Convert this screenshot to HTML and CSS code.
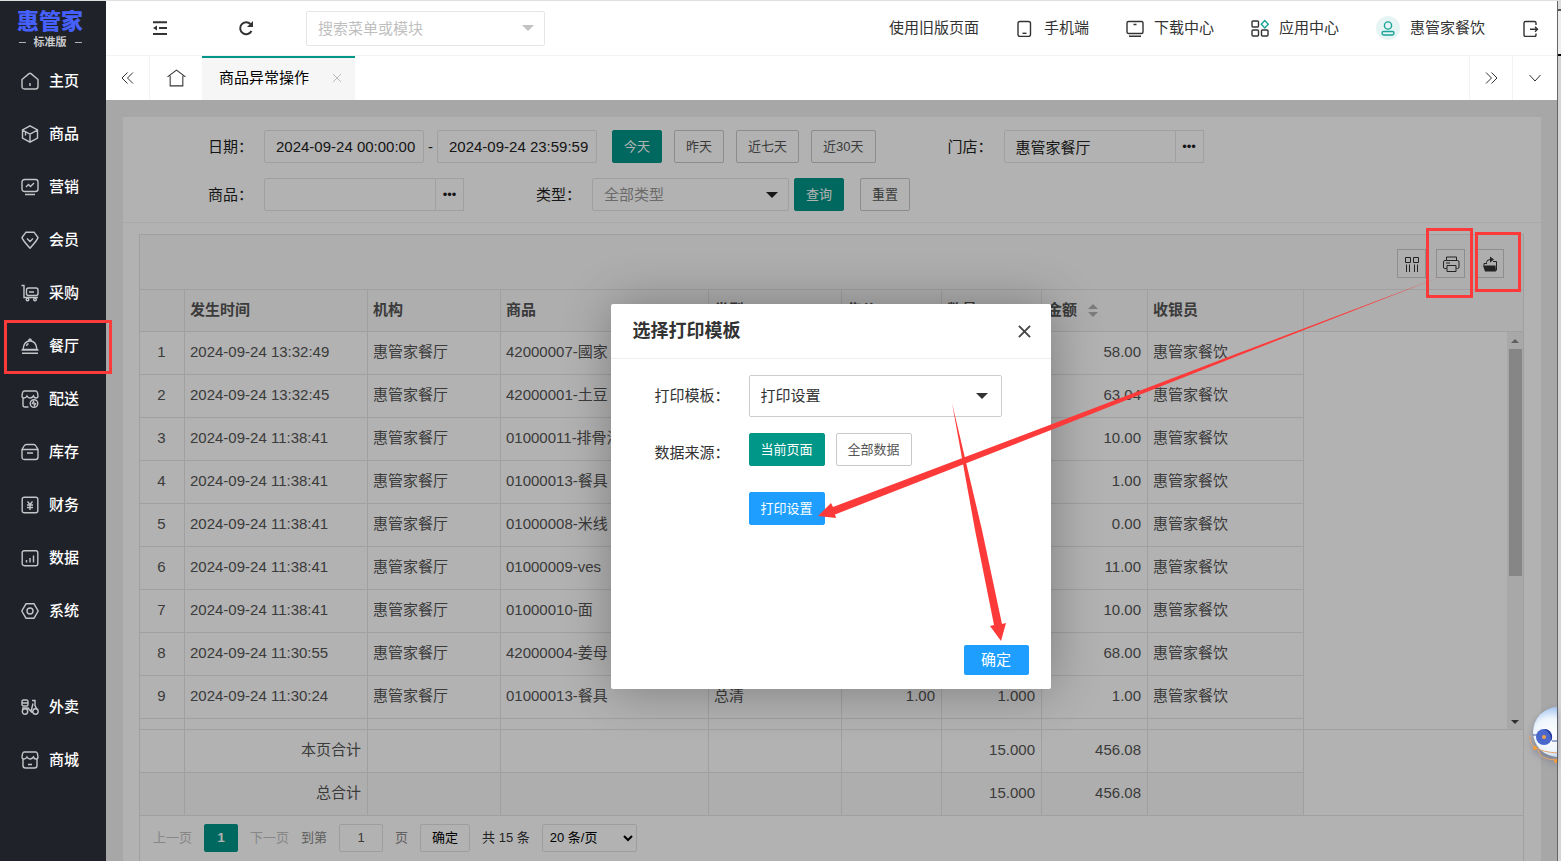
FILE: index.html
```html
<!DOCTYPE html>
<html lang="zh-CN">
<head>
<meta charset="utf-8">
<title>商品异常操作</title>
<link rel="stylesheet" href="styles.css">
</head>
<body>
<div class="app">
  <aside class="sidebar">
    <div class="logo"><strong class="logo-name">惠管家</strong><span class="logo-edition">标准版</span></div>
    <nav class="menu">
      <a class="menu-item" href="#"><svg class="icon" viewBox="0 0 18 18"><path d="M1 7.5 8 1.6q1-.8 2 0L17 7.500V14.500Q17 17 14.500 17H3.500Q1 17 1 14.500ZM9 11v3"/></svg>主页</a>
      <a class="menu-item" href="#"><svg class="icon" viewBox="0 0 18 18"><path d="M9 .8 16.500 5v8L9 17.200 1.500 13V5ZM1.500 5 9 9.200 16.500 5M9 9.200v8M4.500 7v3.500"/></svg>商品</a>
      <a class="menu-item" href="#"><svg class="icon" viewBox="0 0 18 18"><rect x="1" y="1.500" width="16" height="12" rx="2.500"/><path d="m5 9 2.500-2.500 2 2L13 5M4 16.500h10"/></svg>营销</a>
      <a class="menu-item" href="#"><svg class="icon" viewBox="0 0 18 18"><path d="M5 1.200h8L17 6.500Q16.500 9 9 17.200 1.500 9 1 6.500ZM6 7.500l3 3 3-3"/></svg>会员</a>
      <a class="menu-item" href="#"><svg class="icon" viewBox="0 0 18 18"><path d="M.5 1.500h2.500V13.500h14M8 8h5"/><rect x="5.500" y="4" width="11.500" height="7.500" rx="2"/><circle cx="6.500" cy="15.500" r="1.300"/><circle cx="14" cy="15.500" r="1.300"/></svg>采购</a>
      <a class="menu-item" href="#"><svg class="icon" viewBox="0 0 18 18"><path d="M2 12.500C2.500 7.500 5 4 9 4s6.500 3.500 7 8.500ZM.5 13h17M1 16.200h16M7.500 3.500q1.500-3 3 0M5.500 9q.5-2 2-2.500"/></svg>餐厅</a>
      <a class="menu-item" href="#"><svg class="icon" viewBox="0 0 18 18"><path d="M7.500 17H4Q2 17 2 15V8M3 1h12q1 0 1.500 2L17 6q0 2-2 2t-2.500-2Q11 8 9 8T6 6Q5 8 3 8T1 6l.5-3Q2 1 3 1"/><circle cx="13" cy="13.500" r="3.800"/><path d="m11 14 1.500-2.500 1 4L15 13"/></svg>配送</a>
      <a class="menu-item" href="#"><svg class="icon" viewBox="0 0 18 18"><path d="M1 6.500 3 3q.8-1.500 2.500-1.500h7Q14.200 1.500 15 3l2 3.500v7.500q0 2.500-2.500 2.500h-11Q1 16.500 1 14ZM1 6.500h16M6 10h6"/></svg>库存</a>
      <a class="menu-item" href="#"><svg class="icon" viewBox="0 0 18 18"><rect x="1.200" y="1.200" width="15.600" height="15.600" rx="2"/><path d="m6.500 5.500 2.500 3 2.500-3M6 9h6M6 11.500h6M9 8.500V14"/></svg>财务</a>
      <a class="menu-item" href="#"><svg class="icon" viewBox="0 0 18 18"><rect x="1.200" y="1.700" width="15.600" height="15" rx="2"/><path d="M5.500 11v2.500M9 9v4.500M12.500 6.500v7"/></svg>数据</a>
      <a class="menu-item" href="#"><svg class="icon" viewBox="0 0 18 18"><path d="M5 1.800h8L17.200 9 13 16.200H5L.8 9Z"/><circle cx="9" cy="9" r="3"/></svg>系统</a>
      <a class="menu-item menu-group" href="#"><svg class="icon" viewBox="0 0 18 18"><rect x="1" y="2" width="6" height="6" rx="1.500"/><path d="M1 5h6M1 10h6l3 3.500 2-8M11 2.500h3v5l2 4M10 14h2"/><circle cx="4" cy="13.500" r="2.700"/><circle cx="14.500" cy="13.500" r="2.700"/></svg>外卖</a>
      <a class="menu-item" href="#"><svg class="icon" viewBox="0 0 18 18"><path d="M2 8v6.500Q2 17 4.500 17h9q2.500 0 2.500-2.500V8M7 13.500h4M3 1h12q1 0 1.500 2L17 6q0 2-2 2t-2.500-2Q11 8 9 8T6 6Q5 8 3 8T1 6l.5-3Q2 1 3 1"/></svg>商城</a>
    </nav>
  </aside>

  <div class="main">
    <header class="topbar">
      <button class="icon-button" aria-label="收起菜单"><svg class="icon" viewBox="0 0 18 18"><path class="thick" d="M2 3.200h14M8 9h8M2 15h14"/><path class="solid" d="M2 9l4-2.500v5z"/></svg></button>
      <button class="icon-button refresh" aria-label="刷新"><svg class="icon" viewBox="0 0 18 18"><path class="thick" d="M14.500 12A6 6 0 1 1 13.500 5"/><path class="solid" d="M16 2v6h-6z"/></svg></button>
      <div class="select-box search"><input class="field" type="text" aria-label="搜索菜单或模块" placeholder="搜索菜单或模块"><svg class="caret" viewBox="0 0 12 6"><path d="M0 0h12L6 6z"/></svg></div>
      <nav class="links">
        <a class="link" href="#">使用旧版页面</a>
        <a class="link" href="#"><svg class="icon" viewBox="0 0 18 18"><rect x="2" y="2.500" width="12.500" height="15" rx="2"/><path d="M6.500 14.300h4"/></svg>手机端</a>
        <a class="link" href="#"><svg class="icon" viewBox="0 0 18 18"><rect x="1" y="2.500" width="16" height="12" rx="1.500"/><path d="M7.500 5.500h3M3 17.200h12"/></svg>下载中心</a>
        <a class="link" href="#"><svg class="icon" viewBox="0 0 18 18"><rect x="1" y="2" width="6.500" height="6" rx="1"/><rect x="1" y="11" width="6.500" height="6" rx="1"/><rect x="10.500" y="11" width="6.500" height="6" rx="1"/><path class="green" d="M13.800 1.500 17.300 5.200 13.800 9 10.300 5.200Z"/></svg>应用中心</a>
        <a class="link" href="#"><span class="avatar"><svg class="icon" viewBox="0 0 18 18"><circle class="green" cx="9" cy="6.500" r="3.600"/><rect class="green" x="3" y="12.500" width="12" height="3.500" rx="1.700"/></svg></span>惠管家餐饮</a>
        <a class="link" href="#" aria-label="退出"><svg class="icon" viewBox="0 0 18 18"><path d="M14 6V4q0-1.500-1.500-1.500h-9Q2 2.500 2 4v12q0 1.500 1.500 1.500h9q1.500 0 1.500-1.500V14.500M8 10.300h7.500M13 7.800l2.500 2.500-2.500 2.500"/></svg></a>
      </nav>
    </header>

    <div class="tabs">
      <button class="tab-control" aria-label="向左"><svg class="icon thin" viewBox="0 0 18 18"><path d="M8.500 3.500 3 9l5.500 5.500M14 3.500 8.500 9l5.500 5.500"/></svg></button>
      <a class="tab-home" href="#" aria-label="主页"><svg class="icon thin home" viewBox="0 0 18 18"><path d="M.5 7.500 9 1l8.500 6.500M3 6.500V16h12V6.500"/></svg></a>
      <div class="tab"><span>商品异常操作</span><button class="tab-close" aria-label="关闭标签"><svg viewBox="0 0 10 10"><path d="m1 1 8 8M9 1 1 9"/></svg></button></div>
      <button class="tab-control tab-right" aria-label="向右"><svg class="icon thin" viewBox="0 0 18 18"><path d="M4 3.500 9.500 9 4 14.500M9.500 3.500 15 9l-5.500 5.500"/></svg></button>
      <button class="tab-control tab-more" aria-label="更多"><svg class="icon thin" viewBox="0 0 18 18"><path d="m3.500 6 5.500 6 5.500-6"/></svg></button>
    </div>

    <main class="content">
      <section class="panel">
        <form class="filters">
          <div class="filter-row">
            <label class="filter-label first" for="from">日期：</label>
            <input class="field date" id="from" type="text" value="2024-09-24 00:00:00">
            <span class="dash">-</span>
            <input class="field date" type="text" aria-label="结束日期" value="2024-09-24 23:59:59">
            <div class="buttons">
              <button class="btn primary" type="button">今天</button>
              <button class="btn" type="button">昨天</button>
              <button class="btn" type="button">近七天</button>
              <button class="btn" type="button">近30天</button>
            </div>
            <label class="filter-label" for="store">门店：</label>
            <div class="picker"><input class="field" id="store" type="text" value="惠管家餐厅"><button type="button" class="dots" aria-label="选择门店">•••</button></div>
          </div>
          <div class="filter-row">
            <label class="filter-label first" for="goods">商品：</label>
            <div class="picker"><input class="field" id="goods" type="text"><button type="button" class="dots" aria-label="选择商品">•••</button></div>
            <label class="filter-label" for="kind">类型：</label>
            <div class="select-box kind"><select class="field muted" id="kind"><option>全部类型</option></select><svg class="caret" viewBox="0 0 12 6"><path d="M0 0h12L6 6z"/></svg></div>
            <button class="btn primary query" type="button">查询</button>
            <button class="btn reset" type="button">重置</button>
          </div>
        </form>

        <div class="grid">
          <div class="grid-tools">
            <button class="tool" aria-label="筛选列"><svg class="icon thin" viewBox="0 0 18 18"><path d="M2.500 2.500h5v5h-5zM10.500 2.500h5v5h-5zM3.500 9.500V17M6.500 9.500V17M11.500 9.500V17M14.500 9.500V17"/></svg></button>
            <button class="tool" aria-label="打印"><svg class="icon thin" viewBox="0 0 18 18"><path d="M4.500 5V2h10v3M4.500 13.500H2.500Q1.500 13.500 1.500 12V7Q1.500 5.500 3 5.500h12.500q1.500 0 1.500 1.500v5q0 1.500-1.500 1.500h-1M5 10.500h9v6H5zM4 8h4"/></svg></button>
            <button class="tool" aria-label="导出"><svg class="icon thin" viewBox="0 0 18 18"><path class="solid" d="M2 10.500h12.500L15 16.500H4zM9 1.500l4 3-4 3z"/><path d="M5.500 9V7.500q0-3 4-3M12 6.500h3.500v9M3 10.500v-2h3"/></svg></button>
          </div>
          <div class="grid-head">
            <table class="table">
              <colgroup><col class="c-no"><col class="c-time"><col class="c-org"><col class="c-goods"><col class="c-kind"><col class="c-num"><col class="c-num"><col class="c-sum"><col class="c-user"></colgroup>
              <thead><tr><th></th><th>发生时间</th><th>机构</th><th>商品</th><th>类型</th><th>售价<i class="sort"></i></th><th>数量<i class="sort"></i></th><th>金额<i class="sort"></i></th><th>收银员</th></tr></thead>
            </table>
          </div>
          <div class="grid-body">
            <div class="grid-scroll">
              <table class="table">
                <colgroup><col class="c-no"><col class="c-time"><col class="c-org"><col class="c-goods"><col class="c-kind"><col class="c-num"><col class="c-num"><col class="c-sum"><col class="c-user"></colgroup>
                <tbody>
                  <tr><td>1</td><td>2024-09-24 13:32:49</td><td>惠管家餐厅</td><td>42000007-國家</td><td></td><td></td><td></td><td>58.00</td><td>惠管家餐饮</td></tr>
                  <tr><td>2</td><td>2024-09-24 13:32:45</td><td>惠管家餐厅</td><td>42000001-土豆</td><td></td><td></td><td></td><td>63.04</td><td>惠管家餐饮</td></tr>
                  <tr><td>3</td><td>2024-09-24 11:38:41</td><td>惠管家餐厅</td><td>01000011-排骨汤</td><td></td><td></td><td></td><td>10.00</td><td>惠管家餐饮</td></tr>
                  <tr><td>4</td><td>2024-09-24 11:38:41</td><td>惠管家餐厅</td><td>01000013-餐具</td><td></td><td></td><td></td><td>1.00</td><td>惠管家餐饮</td></tr>
                  <tr><td>5</td><td>2024-09-24 11:38:41</td><td>惠管家餐厅</td><td>01000008-米线</td><td></td><td></td><td></td><td>0.00</td><td>惠管家餐饮</td></tr>
                  <tr><td>6</td><td>2024-09-24 11:38:41</td><td>惠管家餐厅</td><td>01000009-ves</td><td></td><td></td><td></td><td>11.00</td><td>惠管家餐饮</td></tr>
                  <tr><td>7</td><td>2024-09-24 11:38:41</td><td>惠管家餐厅</td><td>01000010-面</td><td></td><td></td><td></td><td>10.00</td><td>惠管家餐饮</td></tr>
                  <tr><td>8</td><td>2024-09-24 11:30:55</td><td>惠管家餐厅</td><td>42000004-姜母</td><td></td><td></td><td></td><td>68.00</td><td>惠管家餐饮</td></tr>
                  <tr><td>9</td><td>2024-09-24 11:30:24</td><td>惠管家餐厅</td><td>01000013-餐具</td><td>总清</td><td>1.00</td><td>1.000</td><td>1.00</td><td>惠管家餐饮</td></tr>
                  <tr><td></td><td></td><td></td><td></td><td></td><td></td><td></td><td></td><td></td></tr>
                </tbody>
              </table>
            </div>
            <div class="scrollbar" aria-hidden="true"><svg viewBox="0 0 8 4"><path class="up" d="M0 4h8L4 0z"/></svg><div class="thumb"></div><svg class="end" viewBox="0 0 8 4"><path class="down" d="M0 0h8L4 4z"/></svg></div>
          </div>
          <table class="table totals">
            <colgroup><col class="c-no"><col class="c-time"><col class="c-org"><col class="c-goods"><col class="c-kind"><col class="c-num"><col class="c-num"><col class="c-sum"><col class="c-user"></colgroup>
            <tbody>
              <tr><td></td><td>本页合计</td><td></td><td></td><td></td><td></td><td>15.000</td><td>456.08</td><td></td></tr>
              <tr class="alt"><td></td><td>总合计</td><td></td><td></td><td></td><td></td><td>15.000</td><td>456.08</td><td></td></tr>
            </tbody>
          </table>
          <div class="pager">
            <button class="pager-link" disabled>上一页</button>
            <button class="page-current">1</button>
            <button class="pager-link" disabled>下一页</button>
            <label class="pager-text" for="page">到第</label>
            <input class="pager-box page-input" id="page" type="text" value="1">
            <span class="pager-text">页</span>
            <button class="pager-box page-go">确定</button>
            <span class="pager-count">共 15 条</span>
            <select class="pager-box page-size" aria-label="每页条数"><option>20 条/页</option></select>
          </div>
        </div>
      </section>

      <div class="shade">
        <div class="dialog" role="dialog" aria-labelledby="dialog-title">
          <div class="dialog-head"><h2 class="dialog-title" id="dialog-title">选择打印模板</h2><button class="dialog-close" aria-label="关闭"><svg viewBox="0 0 14 14"><path d="m1 1 12 12M13 1 1 13"/></svg></button></div>
          <div class="dialog-body">
            <label class="dialog-label" for="template">打印模板：</label>
            <div class="select-box template"><select class="field" id="template"><option>打印设置</option></select><svg class="caret" viewBox="0 0 12 6"><path d="M0 0h12L6 6z"/></svg></div>
            <span class="dialog-label source">数据来源：</span>
            <div class="dialog-buttons"><button class="btn primary">当前页面</button><button class="btn">全部数据</button></div>
            <div class="dialog-setting"><button class="btn blue">打印设置</button></div>
          </div>
          <div class="dialog-foot"><button class="confirm">确定</button></div>
        </div>
      </div>
    </main>
  </div>
  <div class="window-edge"></div>
</div>

<svg class="assistant" viewBox="0 0 28 60">
  <defs><radialGradient id="ball" cx=".35" cy=".55" r=".65"><stop offset="0" stop-color="#fff"/><stop offset=".5" stop-color="#eef5fd"/><stop offset="1" stop-color="#86b0ea"/></radialGradient></defs>
  <circle cx="29" cy="29" r="25" fill="url(#ball)"/>
  <path d="M4 32h5M23 38h5" stroke="#3b55a5" stroke-width="1"/>
  <circle cx="15" cy="34" r="8" fill="#4a67cc"/><path d="M15 26a8 8 0 0 1 7 12q1-8-7-12" fill="#26399a"/>
  <circle cx="15" cy="34" r="2" fill="#f5a04a"/>
  <path d="M1 33Q-1 48 28 50M9 47q2 10 19 10" fill="none" stroke="#e7a468" stroke-width="1"/>
  <circle cx="6" cy="45" r="2" fill="#f79b35"/><circle cx="27" cy="58" r="2" fill="#f79b35"/>
</svg>

<svg class="marks" aria-hidden="true">
  <g fill="none" stroke="#fd3a3a" stroke-width="3"><rect x="5.500" y="321.500" width="105" height="51"/><rect x="1427.500" y="229.500" width="44" height="67"/><rect x="1476.500" y="233.500" width="43" height="57"/></g>
  <g fill="#fd3a3a"><path d="M1440 277 1240 355 1051 430 835 514.500 836 518 818 516 831 503 833 507 1051 424.500 1240 352.500Z"/><path d="M952 403 982 530 1002 624 1006 623 1001 641 990 626 994 625 975 530Z"/></g>
</svg>
</body>
</html>
```

FILE: styles.css
```css
* { box-sizing: border-box; }
body { margin: 0; overflow: hidden; color: #333; font: 15px/20px "Liberation Sans", "Noto Sans CJK SC", sans-serif; }
button, input, select { margin: 0; font: inherit; color: inherit; }
button { padding: 0; border: 0; background: none; }
a { color: inherit; text-decoration: none; }
svg { display: block; fill: none; stroke: currentColor; }

.app { display: flex; height: 100vh; border-top: 1px solid #e0e0e0; }
.icon { width: 18px; height: 18px; flex: none; stroke-width: 1.4; }
.icon.thin { stroke-width: 1; }
.thick { stroke-width: 2; }
.solid { fill: currentColor; stroke: none; }
.green { stroke: #19a497; }

/* Sidebar */
.sidebar { width: 106px; flex: none; background: #20222a; color: #fff; }
.logo { display: flex; flex-direction: column; align-items: center; height: 54px; padding: 9px 6px 0 0; }
.logo-name { color: #4560fb; font-size: 22px; line-height: 24px; font-weight: 900; }
.logo-edition { display: flex; align-items: center; gap: 8px; color: #c9cacc; font-size: 11px; line-height: 16px; font-weight: 700; }
.logo-edition::before, .logo-edition::after { content: ""; width: 7px; height: 1px; background: #b0b1b4; }
.menu-item { display: flex; align-items: center; gap: 10px; height: 53px; padding: 0 0 2px 21px; font-weight: 500; }
.menu-item .icon { color: #c4c5c8; }
.menu-group { margin-top: 43px; }

/* Top bar and tabs */
.main { display: flex; flex: 1; flex-direction: column; min-width: 0; }
.topbar { display: flex; align-items: center; height: 55px; flex: none; padding: 0 17px 0 45px; border-bottom: 1px solid #f3f3f3; background: #fff; }
.refresh { margin-left: 68px; }
.search { width: 239px; margin-left: 51px; }
.links { display: flex; align-items: center; gap: 37px; margin-left: auto; }
.link { display: flex; align-items: center; gap: 10px; white-space: nowrap; }
.avatar { display: grid; place-items: center; width: 24px; height: 24px; border-radius: 50%; background: #e6f5f3; }
.tabs { display: flex; height: 44px; flex: none; background: #fff; color: #333; }
.tab-control { display: grid; place-items: center; width: 44px; border-right: 1px solid #f3f3f3; }
.tab-home { display: grid; place-items: center; width: 52px; }
.home { width: 19px; height: 19px; }
.tab { display: flex; align-items: center; gap: 23px; padding: 0 13px 2px 17px; border-top: 2px solid #009688; background: #f6f6f6; color: #000; }
.tab-close { width: 10px; color: #bbb; }
.tab-right { margin-left: auto; border-left: 1px solid #f3f3f3; }
.tab-more { border-right: 0; }

/* Shared controls */
.field { width: 100%; height: 33px; padding: 0 11px; border: 1px solid #e6e6e6; border-radius: 2px; outline: 0; background: #fff; appearance: none; }
.field::placeholder { color: #bfbfbf; }
.select-box { position: relative; }
.caret { position: absolute; right: 11px; top: 50%; width: 12px; height: 6px; margin-top: -3px; fill: currentColor; stroke: none; pointer-events: none; }
.search .field { height: 35px; }
.search .caret { color: #c2c2c2; }
.btn { height: 33px; padding: 0 11px; border: 1px solid #c9c9c9; border-radius: 2px; background: #fff; color: #555; font-size: 13px; white-space: nowrap; }
.btn.primary { border-color: #009688; background: #009688; color: #fff; }
.btn.blue { border-color: #1e9fff; background: #1e9fff; color: #fff; }

/* Content */
.content { position: relative; display: flex; flex: 1; min-height: 0; padding: 17px 16px 0 17px; background: #f0f0f0; }
.panel { display: flex; flex: 1; flex-direction: column; min-width: 0; background: #fff; }
.filters { display: flex; flex-direction: column; gap: 15px; padding: 13px 0 11px; border-bottom: 1px solid #f3f3f3; }
.filter-row { display: flex; align-items: center; color: #222; }
.filter-label { width: 128px; flex: none; padding-right: 11px; text-align: right; white-space: nowrap; }
.filter-label.first { width: 141px; }
.date { width: 160px; padding-right: 0; }
.dash { width: 13px; text-align: center; }
.buttons { display: flex; gap: 12px; margin-left: 15px; }
.picker { display: flex; width: 200px; }
.picker .field { flex: 1; min-width: 0; border-radius: 2px 0 0 2px; }
.dots { width: 28px; border: 1px solid #e6e6e6; border-left: 0; font-size: 13px; color: #222; }
.kind { width: 197px; }
.muted { color: #999; }
.query { margin-left: 5px; }
.reset { margin-left: 16px; }

.grid { display: flex; flex: 1; flex-direction: column; min-height: 0; margin: 11px 17px 0 16px; border: 1px solid #e6e6e6; border-bottom: 0; }
.grid-tools { display: flex; justify-content: flex-end; gap: 10px; height: 55px; flex: none; padding: 14px 19px 0 0; border-bottom: 1px solid #e6e6e6; background: #fafafa; }
.tool { display: grid; place-items: center; width: 29px; height: 29px; border: 1px solid #ccc; }
.table { width: 1164px; flex: none; table-layout: fixed; border-collapse: separate; border-spacing: 0; color: #555; }
.c-no { width: 45px; } .c-time { width: 183px; } .c-org, .c-kind { width: 133px; } .c-goods { width: 208px; }
.c-num { width: 100px; } .c-sum { width: 106px; } .c-user { width: 156px; }
.table th, .table td { height: 43px; padding: 0 6px 2px 5px; overflow: hidden; border-right: 1px solid #e6e6e6; border-bottom: 1px solid #e6e6e6; text-align: left; white-space: nowrap; }
.table th { height: 41px; border-bottom: 0; font-weight: 700; }
.grid-head { flex: none; border-bottom: 1px solid #e6e6e6; background: #fafafa; }
.table td:first-child { text-align: center; }
.table td:nth-child(n+6):nth-child(-n+8), .totals td:nth-child(2) { text-align: right; }
.alt { background: #fafafa; }
.sort { display: inline-grid; gap: 3px; margin-left: 11px; vertical-align: middle; }
.sort::before, .sort::after { content: ""; border: 5px solid transparent; }
.sort::before { border-top: 0; border-bottom-color: #b2b2b2; }
.sort::after { border-bottom: 0; border-top-color: #b2b2b2; }
.grid-body { display: flex; flex: 1; min-height: 0; border-bottom: 1px solid #e6e6e6; }
.grid-scroll { flex: 1; min-width: 0; overflow: hidden; }
.scrollbar { display: flex; flex-direction: column; align-items: center; width: 16px; padding: 7px 0 5px; background: #f1f1f1; }
.scrollbar svg { width: 8px; height: 4px; flex: none; stroke: none; }
.up { fill: #888; }
.down { fill: #444; }
.thumb { width: 13px; height: 59%; margin-top: 6px; background: #c1c1c1; }
.end { margin-top: auto; }
.totals tr:last-child td { height: 42px; border-bottom: 0; }
.pager { display: flex; align-items: center; gap: 12px; height: 46px; flex: none; padding: 0 0 2px 13px; border-top: 1px solid #e6e6e6; font-size: 13px; white-space: nowrap; }
.pager-link { color: #c2c2c2; }
.pager-text { color: #888; }
.page-current { width: 34px; height: 28px; border-radius: 2px; background: #009688; color: #fff; font-weight: 700; }
.pager-box { height: 28px; border: 1px solid #e2e2e2; border-radius: 2px; background: #fff; color: #000; }
.page-input { width: 44px; color: #555; text-align: center; }
.page-go { width: 50px; }
.page-size { width: 95px; padding: 0 3px; }
.pager-count { color: #333; }

/* Dialog */
.shade { position: absolute; inset: 0; display: grid; place-items: center; padding: 32px 2px 0 0; background: rgba(0, 0, 0, .3); }
.dialog { display: flex; flex-direction: column; width: 440px; min-height: 385px; border-radius: 2px; background: #fff; box-shadow: 1px 1px 50px rgba(0, 0, 0, .3); }
.dialog-head { display: flex; align-items: center; justify-content: space-between; height: 55px; padding: 0 20px 0 22px; border-bottom: 1px solid #eee; }
.dialog-title { margin: 0; font-size: 18px; line-height: 24px; }
.dialog-close { width: 13px; color: #444; }
.dialog-close svg { stroke-width: 2; }
.dialog-body { display: grid; grid-template-columns: 94px 253px; align-items: center; row-gap: 16px; padding: 16px 0 0 44px; }
.template .field { height: 42px; border-color: #ccc; }
.template .caret { right: 14px; }
.dialog-label { white-space: nowrap; }
.source { padding-top: 6px; }
.dialog-buttons { display: flex; gap: 11px; }
.dialog-setting { grid-column: 2; margin-top: 10px; }
.dialog-foot { display: flex; justify-content: flex-end; margin-top: auto; padding: 14px 22px; }
.confirm { width: 65px; height: 30px; border-radius: 2px; background: #1e9fff; color: #fff; }

/* Layers above the page */
.window-edge { width: 4px; flex: none; border-left: 1px solid #666; background: linear-gradient(#ddd 8px, #555 8px 10px, #eee 10px 53px, #000 53px 55px, #d4d4d4 55px); }
.assistant { position: absolute; right: 4px; top: 703px; width: 28px; height: 60px; stroke: none; filter: drop-shadow(0 3px 3px rgba(50, 60, 110, .4)); }
.marks { position: absolute; inset: 0; width: 100%; height: 100%; stroke: none; pointer-events: none; }
```
